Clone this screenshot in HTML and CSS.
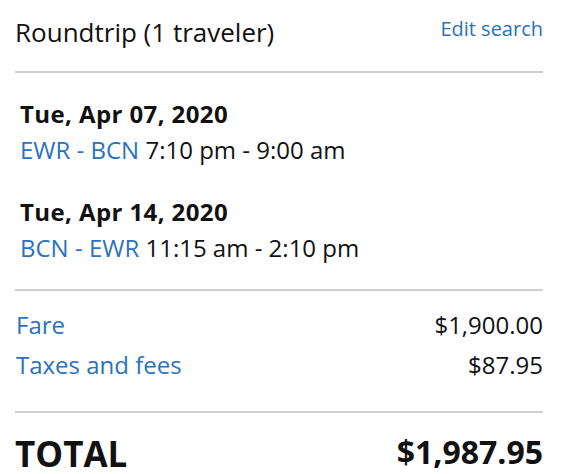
FILE: index.html
```html
<!DOCTYPE html>
<html lang="en">
<head>
    <meta charset="UTF-8">
    <meta name="viewport" content="width=device-width, initial-scale=1.0">
    <title>Trip summary</title>
    <link rel="stylesheet" href="styles.css">
</head>
<body>

<div class="summary">
    <div class="summary-header">
        <span class="trip-type">Roundtrip (1 traveler)</span>
        <a href="#" class="edit-link">Edit search</a>
    </div>

    <div class="flights">
        <div class="flight">
            <div class="flight-date">Tue, Apr 07, 2020</div>
            <div class="flight-info"><a href="#" class="route">EWR - BCN</a> 7:10 pm - 9:00 am</div>
        </div>
        <div class="flight">
            <div class="flight-date">Tue, Apr 14, 2020</div>
            <div class="flight-info"><a href="#" class="route">BCN - EWR</a> 11:15 am - 2:10 pm</div>
        </div>
    </div>

    <div class="prices">
        <div class="price-row">
            <a href="#" class="price-label">Fare</a>
            <span class="price-value">$1,900.00</span>
        </div>
        <div class="price-row">
            <a href="#" class="price-label">Taxes and fees</a>
            <span class="price-value">$87.95</span>
        </div>
    </div>

    <div class="total-row">
        <span class="total-label">TOTAL</span>
        <span class="total-value">$1,987.95</span>
    </div>
</div>

</body>
</html>
```

FILE: styles.css
```css
body {
    margin: 0;
    font-family: "Open Sans", Arial, sans-serif;
    color: #111;
    background-color: #fff;
}
a {
    color: #2a72bf;
    text-decoration: none;
}
.summary {
    padding: 14px 19px 0 15px;
}
.summary-header {
    display: flex;
    justify-content: space-between;
    align-items: flex-start;
    padding-bottom: 21px;
    border-bottom: 2px solid #cfcfcf;
}
.trip-type {
    font-size: 26px;
}
.edit-link {
    font-size: 20px;
    margin-top: 1px;
}
.flights {
    padding: 23px 0 23px 5px;
    border-bottom: 2px solid #cfcfcf;
}
.flight + .flight {
    margin-top: 26px;
}
.flight-date {
    font-size: 24px;
    font-weight: bold;
    letter-spacing: 0.4px;
    line-height: 36px;
}
.flight-info {
    font-size: 24px;
    line-height: 36px;
}
.prices {
    padding: 14px 0 26px 1px;
    border-bottom: 2px solid #cfcfcf;
}
.price-row {
    display: flex;
    justify-content: space-between;
    font-size: 24px;
    line-height: 40px;
}
.total-row {
    display: flex;
    justify-content: space-between;
    align-items: flex-start;
    font-weight: bold;
    padding-top: 17px;
}
.total-label {
    font-size: 35px;
}
.total-value {
    font-size: 32px;
}
```
